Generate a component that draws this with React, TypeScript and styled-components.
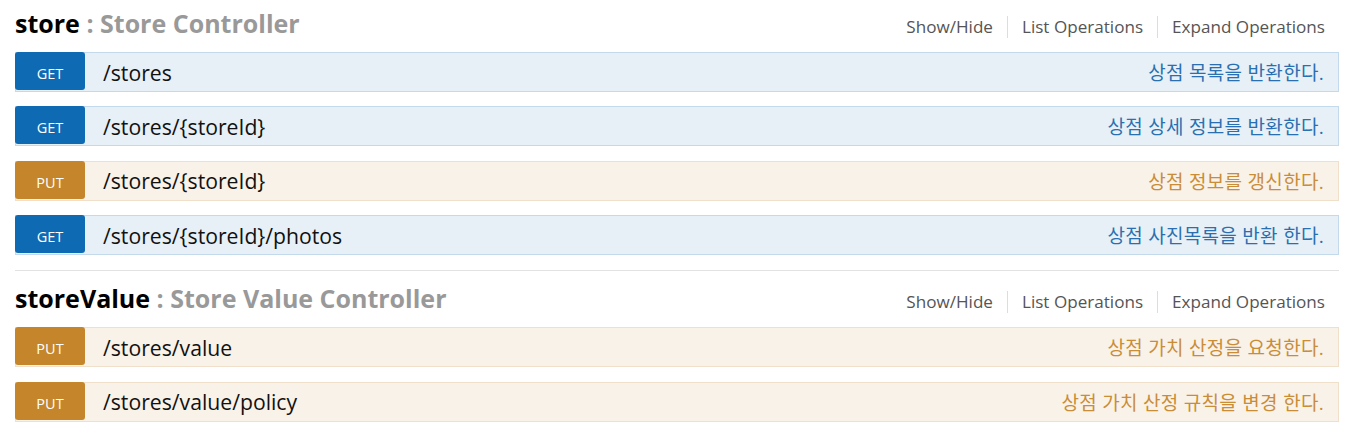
import React from "react";
import styled, { createGlobalStyle } from "styled-components";

type Method = "get" | "put";

const palette: Record<Method, { badge: string; bg: string; border: string; text: string }> = {
  get: { badge: "#0f6ab4", bg: "#e7f0f7", border: "#c3d9ec", text: "#2a70b0" },
  put: { badge: "#c5862b", bg: "#f9f2e9", border: "#f0e0ca", text: "#c98d38" },
};

const GlobalStyle = createGlobalStyle`
  html, body { margin: 0; padding: 0; background: #fff; }
  body { font-family: "Open Sans", "Noto Sans CJK KR", sans-serif; }
`;

const Wrap = styled.div`
  padding: 0 27px 0 15px;
`;

const Section = styled.section<{ $first?: boolean }>`
  padding-top: ${(p) => (p.$first ? "8px" : "12px")};
  padding-bottom: 15px;
  border-top: ${(p) => (p.$first ? "none" : "1px solid #e2e2e2")};
`;

const Heading = styled.div`
  display: flex;
  align-items: flex-start;
  justify-content: space-between;
  height: 44px;
`;

const Title = styled.h2`
  margin: 0;
  font-family: "Open Sans", sans-serif;
  font-weight: 700;
  font-size: 25px;
  line-height: 30px;
  color: #000;
`;

const Sub = styled.span`
  color: #999;
`;

const Links = styled.ul`
  list-style: none;
  margin: 0;
  padding: 0;
  display: flex;
  margin-top: 8px;
`;

const LinkItem = styled.li<{ $sep?: boolean }>`
  padding: 0 14px;
  font-family: "Open Sans", sans-serif;
  font-size: 17.1px;
  line-height: 22px;
  color: #555;
  border-left: ${(p) => (p.$sep ? "1px solid #dddddd" : "none")};
`;

const Ops = styled.ul`
  list-style: none;
  margin: 0;
  padding: 0;
  display: flex;
  flex-direction: column;
  gap: 14.4px;
`;

const Row = styled.li<{ $m: Method }>`
  display: flex;
  align-items: center;
  height: 40px;
  box-sizing: border-box;
  border: 1px solid ${(p) => palette[p.$m].border};
  background: ${(p) => palette[p.$m].bg};
`;

const Badge = styled.span<{ $m: Method }>`
  align-self: flex-start;
  margin: -1px 0 0 -1px;
  width: 70px;
  height: 38px;
  box-sizing: border-box;
  padding-top: 6px;
  display: flex;
  align-items: center;
  justify-content: center;
  background: ${(p) => palette[p.$m].badge};
  border-radius: 3px;
  color: #fff;
  font-family: "Open Sans", sans-serif;
  font-size: 14.5px;
  line-height: 14px;
  text-transform: uppercase;
`;

const Path = styled.span`
  padding-left: 18px;
  font-family: "Open Sans", sans-serif;
  font-size: 21.2px;
  color: #111;
  flex: 1;
`;

const Desc = styled.span<{ $m: Method }>`
  padding-right: 14px;
  font-family: "Open Sans", "Noto Sans CJK KR", sans-serif;
  font-size: 19px;
  letter-spacing: 0.3px;
  color: ${(p) => palette[p.$m].text};
`;

type Op = { m: Method; path: string; desc: string };
type Res = { name: string; sub: string; ops: Op[] };

const resources: Res[] = [
  {
    name: "store",
    sub: "Store Controller",
    ops: [
      { m: "get", path: "/stores", desc: "상점 목록을 반환한다." },
      { m: "get", path: "/stores/{storeId}", desc: "상점 상세 정보를 반환한다." },
      { m: "put", path: "/stores/{storeId}", desc: "상점 정보를 갱신한다." },
      { m: "get", path: "/stores/{storeId}/photos", desc: "상점 사진목록을 반환 한다." },
    ],
  },
  {
    name: "storeValue",
    sub: "Store Value Controller",
    ops: [
      { m: "put", path: "/stores/value", desc: "상점 가치 산정을 요청한다." },
      { m: "put", path: "/stores/value/policy", desc: "상점 가치 산정 규칙을 변경 한다." },
    ],
  },
];

export default function App() {
  return (
    <>
      <GlobalStyle />
      <Wrap>
        {resources.map((r, i) => (
          <Section key={r.name} $first={i === 0}>
            <Heading>
              <Title>
                {r.name} <Sub>: {r.sub}</Sub>
              </Title>
              <Links>
                <LinkItem>Show/Hide</LinkItem>
                <LinkItem $sep>List Operations</LinkItem>
                <LinkItem $sep>Expand Operations</LinkItem>
              </Links>
            </Heading>
            <Ops>
              {r.ops.map((o, j) => (
                <Row key={j} $m={o.m}>
                  <Badge $m={o.m}>{o.m}</Badge>
                  <Path>{o.path}</Path>
                  <Desc $m={o.m}>{o.desc}</Desc>
                </Row>
              ))}
            </Ops>
          </Section>
        ))}
      </Wrap>
    </>
  );
}
